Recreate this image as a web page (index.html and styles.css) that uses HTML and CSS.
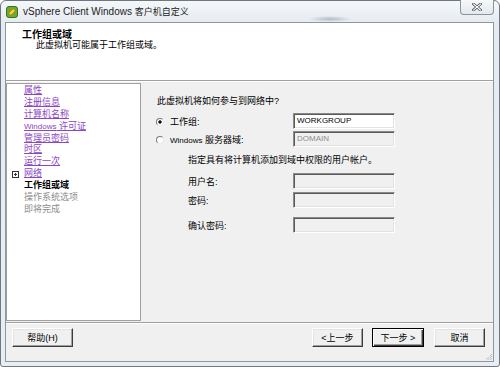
FILE: index.html
```html
<!DOCTYPE html>
<html lang="zh-CN">
<head>
    <meta charset="UTF-8">
    <meta name="viewport" content="width=device-width, initial-scale=1.0">
    <title>vSphere Client Windows 客户机自定义</title>
    <link rel="stylesheet" href="styles.css">
</head>
<body>
    <div class="window">
        <div class="titlebar">
            <svg class="app-icon" width="12" height="12" viewBox="0 0 12 12">
                <rect x="0.5" y="0.5" width="11" height="11" rx="2.5" fill="#72a934" stroke="#3f6e1c"/>
                <rect x="2.5" y="4.4" width="7" height="3.2" rx="1.6" transform="rotate(-45 6 6)" fill="#f4d735" stroke="#8a7a10" stroke-width="0.6"/>
            </svg>
            <span class="title">vSphere Client Windows <span class="title-cjk">客户机自定义</span></span>
            <div class="close">
                <svg width="10" height="8" viewBox="0 0 10 8">
                    <path d="M1.5 1 L8.5 7 M8.5 1 L1.5 7" stroke="#4a4f57" stroke-width="2.6" stroke-linecap="square"/>
                    <path d="M1.5 1 L8.5 7 M8.5 1 L1.5 7" stroke="#fff" stroke-width="1.1" stroke-linecap="square"/>
                </svg>
            </div>
        </div>

        <div class="client">
            <div class="header">
                <div class="header-title">工作组或域</div>
                <div class="header-sub">此虚拟机可能属于工作组或域。</div>
            </div>

            <div class="main">
                <ul class="steps">
                    <li><span class="exp"></span><a class="link">属性</a></li>
                    <li><span class="exp"></span><a class="link">注册信息</a></li>
                    <li><span class="exp"></span><a class="link">计算机名称</a></li>
                    <li><span class="exp"></span><a class="link"><span class="lat">Windows</span> 许可证</a></li>
                    <li><span class="exp"></span><a class="link">管理员密码</a></li>
                    <li><span class="exp"></span><a class="link">时区</a></li>
                    <li><span class="exp"></span><a class="link">运行一次</a></li>
                    <li><span class="exp"><span class="plus-box"></span></span><a class="link">网络</a></li>
                    <li class="current"><span class="exp"></span>工作组或域</li>
                    <li class="pending"><span class="exp"></span>操作系统选项</li>
                    <li class="pending"><span class="exp"></span>即将完成</li>
                </ul>

                <div class="page">
                    <div class="question">此虚拟机将如何参与到网络中?</div>

                    <div class="row row-first">
                        <span class="radio checked"></span>
                        <span class="label">工作组:</span>
                        <div class="input">WORKGROUP</div>
                    </div>
                    <div class="row row-second">
                        <span class="radio"></span>
                        <span class="label"><span class="lat">Windows</span> 服务器域:</span>
                        <div class="input disabled">DOMAIN</div>
                    </div>

                    <div class="note">指定具有将计算机添加到域中权限的用户帐户。</div>

                    <div class="row sub row-user">
                        <span class="label">用户名:</span>
                        <div class="input disabled"></div>
                    </div>
                    <div class="row sub row-pass">
                        <span class="label">密码:</span>
                        <div class="input disabled"></div>
                    </div>
                    <div class="row sub row-confirm">
                        <span class="label">确认密码:</span>
                        <div class="input disabled"></div>
                    </div>
                </div>
            </div>

            <div class="footer">
                <button class="btn btn-help">帮助(H)</button>
                <button class="btn btn-back">&lt;上一步</button>
                <button class="btn btn-next default">下一步 &gt;</button>
                <button class="btn btn-cancel">取消</button>
                <svg class="grip" width="8" height="8" viewBox="0 0 8 8">
                    <path d="M7 1 L1 7 M7 3 L3 7 M7 5 L5 7" stroke="#a0a0a0" stroke-width="1" stroke-dasharray="1 1"/>
                </svg>
            </div>
        </div>
    </div>
</body>
</html>
```

FILE: styles.css
```css
body {
    margin: 0;
    background: #fff;
    font-family: "Liberation Sans", "Noto Sans CJK SC", sans-serif;
    font-size: 9px;
    color: #000;
}
.window {
    box-sizing: border-box;
    width: 500px;
    height: 367px;
    border: 1px solid #6f7781;
    border-radius: 6px 6px 3px 3px;
    background: linear-gradient(#f5f7fa, #e6ebf1 22px, #e9eef3);
    display: flex;
    flex-direction: column;
    padding: 0 5px 4px 4px;
}
.titlebar {
    height: 21px;
    display: flex;
    align-items: center;
    background: radial-gradient(ellipse 22px 3px at 325px 18px, rgba(80, 90, 110, 0.35), transparent);
}
.app-icon {
    margin-left: 1px;
    margin-right: 5px;
    flex: none;
}
.title {
    font-size: 10px;
    line-height: 14px;
    color: #1c1c1c;
    padding-top: 1px;
}
.title-cjk {
    font-size: 9px;
}
.close {
    margin-left: auto;
    align-self: flex-start;
    margin-top: -1px;
    width: 34px;
    height: 15px;
    box-sizing: border-box;
    border: 1px solid #8b939c;
    border-top: none;
    border-radius: 0 0 4px 4px;
    background: linear-gradient(#f6f8fa, #e3e8ee);
    display: flex;
    align-items: center;
    justify-content: center;
}
.client {
    flex: 1;
    border: 1px solid #8e969f;
    background: #f0f0f0;
    display: flex;
    flex-direction: column;
    min-height: 0;
}
.header {
    height: 57px;
    background: #fff;
    border-bottom: 1px solid #a0a0a0;
    padding: 7px 0 0 16px;
    box-sizing: border-box;
    height: 58px;
}
.header-title {
    font-weight: bold;
    font-size: 10px;
    line-height: 10px;
}
.header-sub {
    line-height: 10px;
    padding-left: 14px;
}
.main {
    flex: 1;
    display: flex;
    border-top: 1px solid #fff;
    min-height: 0;
}
.steps {
    list-style: none;
    margin: 1px 0 1px 0;
    padding: 1px 0 0 0;
    width: 135px;
    box-sizing: border-box;
    background: #fff;
    border: 1px solid #a0a0a0;
}
.steps li {
    display: flex;
    align-items: center;
    height: 11.9px;
    line-height: 11.9px;
}
.exp {
    width: 17px;
    flex: none;
    display: flex;
    align-items: center;
}
.plus-box {
    width: 7px;
    height: 7px;
    margin-left: 5px;
    box-sizing: border-box;
    border: 1px solid #333;
    background:
        linear-gradient(#333, #333) center / 3px 1px no-repeat,
        linear-gradient(#333, #333) center / 1px 3px no-repeat;
}
.link {
    color: #8b45c5;
    text-decoration: underline;
}
.lat {
    font-size: 8px;
}
.current {
    font-weight: bold;
}
.pending {
    color: #8c8c8c;
}
.page {
    flex: 1;
    padding: 13px 0 0 16px;
}
.question {
    line-height: 12px;
}
.row {
    display: flex;
    align-items: center;
    width: 238px;
    height: 16px;
    box-sizing: border-box;
}
.row.sub {
    padding-left: 31px;
}
.row-first { margin-top: 6px; }
.row-second { margin-top: 2px; }
.row-user { margin-top: 7px; }
.row-pass { margin-top: 3px; }
.row-confirm { margin-top: 9px; }
.radio {
    width: 8px;
    height: 8px;
    box-sizing: border-box;
    margin: 2px 6px 0 -1px;
    border-radius: 50%;
    border: 1px solid;
    border-color: #7a7a7a #e8e8e8 #e8e8e8 #7a7a7a;
    background: #fff;
    flex: none;
}
.radio.checked {
    background: radial-gradient(circle, #111 1.4px, #fff 1.9px);
}
.label {
    flex: 1;
    line-height: 12px;
    padding-top: 2px;
}
.input {
    width: 102px;
    height: 16px;
    box-sizing: border-box;
    border: 1px solid;
    border-color: #8a8a8a #fff #fff #8a8a8a;
    box-shadow: inset 1px 1px #5a5a5a, inset -1px -1px #e3e3e3;
    background: #fff;
    font-size: 8px;
    line-height: 14px;
    padding-left: 3px;
    flex: none;
}
.input.disabled {
    background: #f0f0f0;
    color: #8c8c8c;
}
.note {
    margin-top: 7px;
    padding-left: 31px;
    line-height: 12px;
}
.footer {
    position: relative;
    height: 39px;
    box-sizing: border-box;
    border-top: 1px solid #a0a0a0;
    box-shadow: inset 0 1px #fff;
    display: flex;
    align-items: flex-start;
    padding: 5px 8px 0 6px;
}
.btn {
    box-sizing: border-box;
    height: 19px;
    padding: 0;
    background: #f0f0f0;
    border: 1px solid;
    border-color: #fff #3c3c3c #3c3c3c #fff;
    box-shadow: inset -1px -1px #a0a0a0, inset 1px 1px #e3e3e3;
    font-family: "Liberation Sans", "Noto Sans CJK SC", sans-serif;
    font-size: 9px;
    color: #000;
}
.btn-help { width: 61px; }
.btn-back { width: 51px; margin-left: auto; }
.btn-next { width: 52px; margin-left: 9px; }
.btn-cancel { width: 51px; margin-left: 10px; }
.btn.default {
    border-color: #000;
    box-shadow: inset 1px 1px #fff, inset -1px -1px #3c3c3c, inset -2px -2px #a0a0a0;
}
.grip {
    position: absolute;
    right: 0;
    bottom: 0;
}
```
